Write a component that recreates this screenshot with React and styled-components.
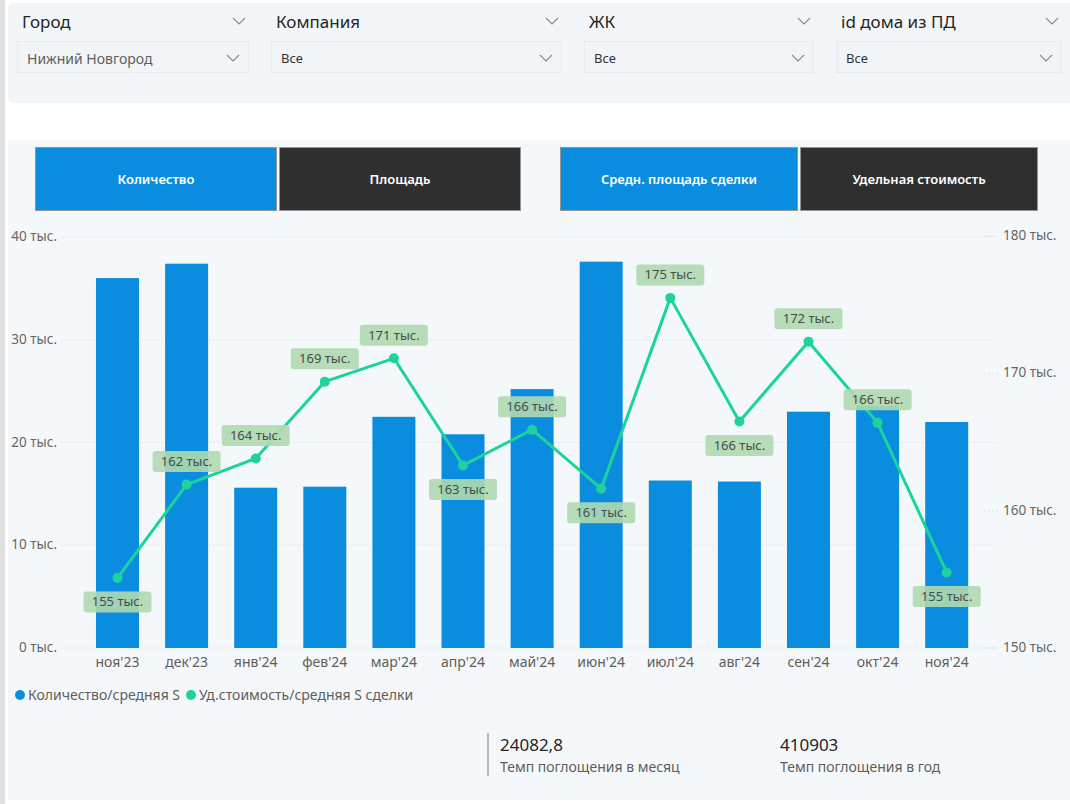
import styled, { createGlobalStyle } from "styled-components";

const GlobalStyle = createGlobalStyle`
  body {
    margin: 0;
    background: #ffffff;
    font-family: "Noto Sans", "Open Sans", sans-serif;
  }
`;

const filters = [
  { label: "Город", value: "Нижний Новгород", muted: true },
  { label: "Компания", value: "Все" },
  { label: "ЖК", value: "Все" },
  { label: "id дома из ПД", value: "Все" },
];

const months = [
  "ноя'23", "дек'23", "янв'24", "фев'24", "мар'24", "апр'24", "май'24",
  "июн'24", "июл'24", "авг'24", "сен'24", "окт'24", "ноя'24",
];

// количество / средняя S, тыс.
const bars = [36.0, 37.4, 15.6, 15.7, 22.5, 20.8, 25.2, 37.6, 16.3, 16.2, 23.0, 23.6, 22.0];
// уд. стоимость, тыс.
const line = [155.1, 161.9, 163.8, 169.4, 171.1, 163.3, 165.9, 161.6, 175.5, 166.5, 172.3, 166.4, 155.5];
const lineLabels = [155, 162, 164, 169, 171, 163, 166, 161, 175, 166, 172, 166, 155];
const below = [true, false, false, false, false, true, false, true, false, true, false, false, true];

const X0 = 117.5;
const STEP = 69.1;
const BASE = 648;
const leftY = (v) => BASE - v * 10.275;
const rightY = (v) => BASE - (v - 150) * 13.73;

const ChevronIcon = ({ color = "#8a8886" }) => (
  <svg width="14" height="8" viewBox="0 0 14 8">
    <polyline points="1,1 7,7 13,1" fill="none" stroke={color} strokeWidth="1.1" />
  </svg>
);

const Chart = () => {
  const pts = line.map((v, i) => [X0 + i * STEP, rightY(v)]);
  return (
    <ChartSvg width="1062" height="455" viewBox="0 0 1062 455">
      <g transform="translate(-8,-222)">
        {[0, 10, 20, 30, 40].map((t) => (
          <g key={t}>
            <line x1="62" x2="995" y1={leftY(t)} y2={leftY(t)} stroke="#cdd1d6" strokeWidth="1" strokeDasharray="1 3" />
            <text x="57" y={leftY(t) + 4} textAnchor="end" fontSize="13.5" fill="#666">
              {t} тыс.
            </text>
          </g>
        ))}
        {[150, 160, 170, 180].map((t) => (
          <g key={t}>
            <line x1="984" x2="998" y1={rightY(t)} y2={rightY(t)} stroke="#cdd1d6" strokeWidth="1" strokeDasharray="1 3" />
            <text x="1003" y={rightY(t) + 4} fontSize="13.5" fill="#666">
              {t} тыс.
            </text>
          </g>
        ))}
        {bars.map((v, i) => (
          <rect key={i} x={X0 + i * STEP - 21.5} y={leftY(v)} width="43" height={BASE - leftY(v)} fill="#0b8ddf" />
        ))}
        {months.map((m, i) => (
          <text key={m} x={X0 + i * STEP} y="667" textAnchor="middle" fontSize="14" fill="#605e5c">
            {m}
          </text>
        ))}
        <polyline points={pts.map((p) => p.join(",")).join(" ")} fill="none" stroke="#1cd39b" strokeWidth="3" strokeLinejoin="round" />
        {pts.map(([x, y], i) => (
          <circle key={i} cx={x} cy={y} r="5" fill="#1cd39b" />
        ))}
        {pts.map(([x, y], i) => {
          const cy = below[i] ? y + 24 : y - 23;
          return (
            <g key={i}>
              <rect x={x - 34} y={cy - 10.5} width="68" height="21" rx="3" fill="#afd9af" opacity="0.9" />
              <text x={x} y={cy + 4.5} textAnchor="middle" fontSize="13" fill="#4a4a4a">
                {lineLabels[i]} тыс.
              </text>
            </g>
          );
        })}
      </g>
    </ChartSvg>
  );
};

const App = () => (
  <Page>
    <GlobalStyle />
    <Main>
      <FilterPanel>
        {filters.map((f) => (
          <Filter key={f.label}>
            <FilterHead>
              <FilterLabel>{f.label}</FilterLabel>
              <ChevronIcon />
            </FilterHead>
            <Dropdown>
              <DropdownValue $muted={f.muted}>{f.value}</DropdownValue>
              <ChevronIcon />
            </Dropdown>
          </Filter>
        ))}
      </FilterPanel>

      <ChartPanel>
        <ButtonRow>
          <ButtonGroup>
            <ToggleButton $active $width="242px">Количество</ToggleButton>
            <ToggleButton $width="242px">Площадь</ToggleButton>
          </ButtonGroup>
          <ButtonGroup>
            <ToggleButton $active $width="238px">Средн. площадь сделки</ToggleButton>
            <ToggleButton $width="238px">Удельная стоимость</ToggleButton>
          </ButtonGroup>
        </ButtonRow>

        <Chart />

        <Legend>
          <LegendItem>
            <Dot $color="#0b8ddf" />
            Количество/средняя S
          </LegendItem>
          <LegendItem>
            <Dot $color="#1cd39b" />
            Уд.стоимость/средняя S сделки
          </LegendItem>
        </Legend>

        <KpiRow>
          <Kpi $divider>
            <KpiValue>24082,8</KpiValue>
            <KpiCaption>Темп поглощения в месяц</KpiCaption>
          </Kpi>
          <Kpi>
            <KpiValue>410903</KpiValue>
            <KpiCaption>Темп поглощения в год</KpiCaption>
          </Kpi>
        </KpiRow>
      </ChartPanel>
    </Main>
  </Page>
);

const Page = styled.div`
  display: flex;
  height: 804px;
  border-left: 5px solid #e0e0e0;
  padding-left: 3px;
  box-sizing: border-box;
  overflow: hidden;
`;

const Main = styled.div`
  flex: 1;
  display: flex;
  flex-direction: column;
`;

const FilterPanel = styled.div`
  margin-top: 3px;
  height: 100px;
  box-sizing: border-box;
  padding: 5px 0 0 9px;
  background: #f3f6f9;
  border-radius: 6px 0 0 6px;
  display: grid;
  grid-template-columns: 232px 291px 230px 226px;
  column-gap: 22px;
  align-content: start;
`;

const Filter = styled.div`
  display: flex;
  flex-direction: column;
  gap: 7px;
`;

const FilterHead = styled.div`
  height: 26px;
  display: flex;
  align-items: center;
  justify-content: space-between;
  padding: 0 3px 0 5px;
`;

const FilterLabel = styled.span`
  font-size: 17px;
  color: #252423;
`;

const Dropdown = styled.div`
  height: 32px;
  box-sizing: border-box;
  border: 1px solid #e7eaee;
  background: #f2f5f8;
  display: flex;
  align-items: center;
  justify-content: space-between;
  padding: 2px 8px 0 9px;
`;

const DropdownValue = styled.span`
  font-size: ${(p) => (p.$muted ? "14px" : "13px")};
  color: ${(p) => (p.$muted ? "#605e5c" : "#333333")};
`;

const ChartPanel = styled.div`
  margin-top: 37px;
  margin-bottom: 4px;
  flex: 1;
  background: #f5f8fb;
  padding-top: 7px;
  display: flex;
  flex-direction: column;
`;

const ButtonRow = styled.div`
  display: flex;
  gap: 39px;
  padding-left: 27px;
`;

const ButtonGroup = styled.div`
  display: flex;
  gap: 2px;
`;

const ToggleButton = styled.div`
  width: ${(p) => p.$width};
  height: 64px;
  box-sizing: border-box;
  border: 1px solid #8f969c;
  background: ${(p) => (p.$active ? "#0b8ddf" : "#2f2f2f")};
  color: #ffffff;
  font-size: 13px;
  font-weight: 600;
  display: flex;
  align-items: center;
  justify-content: center;
`;

const ChartSvg = styled.svg`
  display: block;
  margin-top: 11px;
  font-family: "Noto Sans", "Open Sans", sans-serif;
`;

const Legend = styled.div`
  display: flex;
  gap: 6px;
  padding-left: 7px;
  margin-top: 8px;
  font-size: 14px;
  color: #605e5c;
`;

const LegendItem = styled.div`
  display: flex;
  align-items: center;
  gap: 3px;
`;

const Dot = styled.span`
  width: 10px;
  height: 10px;
  border-radius: 50%;
  background: ${(p) => p.$color};
`;

const KpiRow = styled.div`
  display: flex;
  padding-left: 479px;
  margin-top: 29px;
`;

const Kpi = styled.div`
  width: 293px;
  box-sizing: border-box;
  padding-left: ${(p) => (p.$divider ? "11px" : "0")};
  border-left: ${(p) => (p.$divider ? "2px solid #b9bcbf" : "none")};
  display: flex;
  flex-direction: column;
  gap: 1px;
`;

const KpiValue = styled.span`
  font-size: 17px;
  color: #252423;
`;

const KpiCaption = styled.span`
  font-size: 14px;
  color: #605e5c;
`;

export default App;
